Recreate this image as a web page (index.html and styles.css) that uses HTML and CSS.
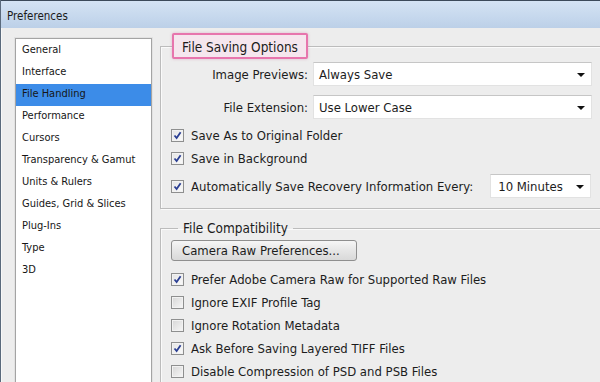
FILE: index.html
```html
<!DOCTYPE html>
<html lang="en">
<head>
  <meta charset="UTF-8">
  <title>Preferences</title>
  <link rel="stylesheet" href="styles.css">
</head>
<body>
  <div class="window">
    <div class="title-bar">Preferences</div>

    <div class="window-body">
      <!-- Category list -->
      <ul class="category-list">
        <li>General</li>
        <li>Interface</li>
        <li class="selected">File Handling</li>
        <li>Performance</li>
        <li>Cursors</li>
        <li>Transparency &amp; Gamut</li>
        <li>Units &amp; Rulers</li>
        <li>Guides, Grid &amp; Slices</li>
        <li>Plug-Ins</li>
        <li>Type</li>
        <li>3D</li>
      </ul>

      <div class="settings">
        <fieldset class="group saving">
          <legend class="legend-highlight">File Saving Options</legend>

          <div class="field-row">
            <label class="field-label">Image Previews:</label>
            <div class="dropdown wide">Always Save<span class="arrow"></span></div>
          </div>

          <div class="field-row">
            <label class="field-label">File Extension:</label>
            <div class="dropdown wide">Use Lower Case<span class="arrow"></span></div>
          </div>

          <div class="check-row first">
            <span class="check on"><svg viewBox="0 0 9 9"><path d="M1.5 4.5 L3.6 7 L7.6 1.2" /></svg></span>
            Save As to Original Folder
          </div>
          <div class="check-row">
            <span class="check on"><svg viewBox="0 0 9 9"><path d="M1.5 4.5 L3.6 7 L7.6 1.2" /></svg></span>
            Save in Background
          </div>
          <div class="check-row auto-save">
            <span class="check on"><svg viewBox="0 0 9 9"><path d="M1.5 4.5 L3.6 7 L7.6 1.2" /></svg></span>
            Automatically Save Recovery Information Every:
            <div class="dropdown small">10 Minutes<span class="arrow"></span></div>
          </div>
        </fieldset>

        <fieldset class="group compat">
          <legend class="legend-plain">File Compatibility</legend>

          <button class="push-button">Camera Raw Preferences...</button>

          <div class="check-list">
            <div class="check-row">
              <span class="check on"><svg viewBox="0 0 9 9"><path d="M1.5 4.5 L3.6 7 L7.6 1.2" /></svg></span>
              Prefer Adobe Camera Raw for Supported Raw Files
            </div>
            <div class="check-row">
              <span class="check"></span>
              Ignore EXIF Profile Tag
            </div>
            <div class="check-row">
              <span class="check"></span>
              Ignore Rotation Metadata
            </div>
            <div class="check-row">
              <span class="check on"><svg viewBox="0 0 9 9"><path d="M1.5 4.5 L3.6 7 L7.6 1.2" /></svg></span>
              Ask Before Saving Layered TIFF Files
            </div>
            <div class="check-row">
              <span class="check"></span>
              Disable Compression of PSD and PSB Files
            </div>
          </div>
        </fieldset>
      </div>
    </div>
  </div>
</body>
</html>
```

FILE: styles.css
```css
/* Global Styles */
body {
  margin: 0;
  padding: 0;
  width: 600px;
  height: 382px;
  overflow: hidden;
  background: #ededed;
  font-family: "DejaVu Sans Condensed", "DejaVu Sans", sans-serif;
  font-stretch: condensed;
  font-size: 13px;
  color: #1c1c1c;
}

.window {
  height: 382px;
  overflow: hidden;
  border-left: 1px solid #5a6a7c;
}

/* Title bar */
.title-bar {
  height: 28px;
  line-height: 30px;
  padding-left: 6px;
  font-size: 11.5px;
  color: #1b1b1b;
  background: linear-gradient(to bottom, #d4e3f4, #bcd0e8);
  border-top: 1px solid #3c4a5a;
  box-sizing: border-box;
}

.window-body {
  display: flex;
  padding: 10px 0 0 13px;
  border-left: 1px solid #f8f8f8;
}

/* Category list */
.category-list {
  list-style: none;
  margin: 0;
  padding: 1px 0 0 0;
  width: 135px;
  height: 360px;
  flex-shrink: 0;
  background: #fff;
  border: 1px solid #a4a4a4;
  box-shadow: 0 0 0 1px #e2e2e2;
  font-size: 11px;
}

.category-list li {
  height: 22px;
  line-height: 20px;
  padding-left: 6px;
  color: #161616;
}

.category-list li.selected {
  background: #3c8ce8;
}

/* Settings side */
.settings {
  margin: -5px 0 0 8px;
  width: 470px;
  flex-shrink: 0;
}

.group {
  margin: 0;
  padding: 3px 0 10px 10px;
  border: 1px solid #bcbcbc;
  box-shadow: inset 1px 1px 0 #fafafa, 1px 1px 0 #fafafa;
  min-inline-size: 0;
}

.legend-highlight {
  margin-left: 1px;
  padding: 0 8px;
  height: 26px;
  line-height: 24px;
  box-sizing: border-box;
  font-size: 13.5px;
  border: 2px solid #e775ad;
  border-radius: 2px;
  background: #f5e6ee;
  box-shadow: 0 0 3px rgba(200, 80, 140, 0.35);
}

.group.compat {
  margin-top: 11px;
  padding-top: 4px;
}

.legend-plain {
  margin-left: 7px;
  padding: 0 5px;
  height: 16px;
  line-height: 16px;
  font-size: 13.5px;
}

/* Label + dropdown rows */
.field-row {
  display: flex;
  align-items: center;
  margin-bottom: 9px;
}

.field-label {
  width: 137px;
  text-align: right;
  margin-right: 5px;
}

.dropdown {
  position: relative;
  height: 24px;
  line-height: 24px;
  padding-left: 5px;
  box-sizing: border-box;
  background: #fff;
  border: 1px solid #e2e2e2;
  border-top-color: #c6c6c6;
}

.dropdown.wide {
  width: 279px;
}

.dropdown.small {
  width: 101px;
  margin-left: 17px;
  padding-left: 7px;
}

.arrow {
  position: absolute;
  right: 6px;
  top: 10px;
  border-left: 4px solid transparent;
  border-right: 4px solid transparent;
  border-top: 4px solid #111;
}

/* Checkbox rows */
.check-row {
  display: flex;
  align-items: center;
  height: 23px;
}

.check-row.first {
  margin-top: -4px;
}

.check-row.auto-save {
  height: 24px;
  margin-top: 4px;
}

.check {
  width: 11px;
  height: 11px;
  margin-right: 7px;
  border: 1px solid #8e8f8f;
  background: linear-gradient(135deg, #d6d6d6, #f7f7f7);
  box-shadow: inset 0 0 0 1px #f2f2f2;
  flex-shrink: 0;
}

.check.on {
  background: linear-gradient(135deg, #e4e4e4, #fbfbfb);
}

.check svg {
  display: block;
  width: 9px;
  height: 9px;
  margin: 1px;
}

.check svg path {
  fill: none;
  stroke: #2b3f93;
  stroke-width: 1.8;
}

/* Button */
.push-button {
  display: block;
  width: 186px;
  height: 21px;
  padding: 0 0 0 10px;
  text-align: left;
  font-family: inherit;
  font-stretch: condensed;
  font-size: 13px;
  color: #1c1c1c;
  border: 1px solid #8f8f8f;
  border-radius: 3px;
  background: linear-gradient(to bottom, #f6f6f6, #e6e6e6 50%, #d9d9d9);
}

.check-list {
  margin-top: 7px;
}
```
